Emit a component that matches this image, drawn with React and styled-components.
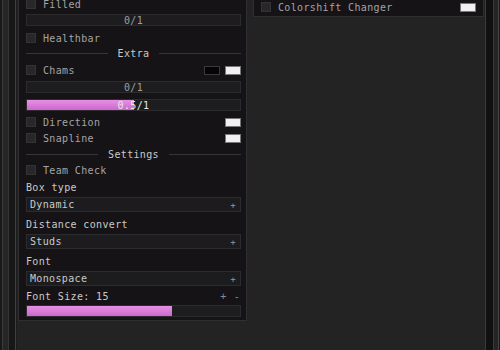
import React from "react";
import styled, { createGlobalStyle } from "styled-components";

const Global = createGlobalStyle`
  html, body { margin: 0; padding: 0; background: #232323; }
  body { font-family: "DejaVu Sans Mono", "Liberation Mono", monospace; }
`;

const Screen = styled.div`
  width: 500px;
  height: 350px;
  display: flex;
  overflow: hidden;
  background: #232323;
`;

const LeftFrame = styled.div`
  width: 17px;
  flex: none;
  background: linear-gradient(
    to right,
    #19191a 0 2px,
    #3b3b3c 2px 3px,
    #262627 3px 8px,
    #353536 8px 9px,
    #171718 9px 15px,
    #3f3f40 15px 16px,
    #1c1c1d 16px 17px
  );
`;

const RightFrame = styled.div`
  width: 15px;
  flex: none;
  background: linear-gradient(
    to right,
    #3a3a3b 0 1px,
    #111112 1px 8px,
    #3a3a3b 8px 9px,
    #252526 9px 13px,
    #444445 13px 14px,
    #1a1a1b 14px 15px
  );
`;

const Content = styled.div`
  flex: 1;
  display: flex;
  align-items: flex-start;
  gap: 6px;
  padding-left: 1px;
`;

const Panel = styled.div`
  width: ${(p) => p.$w}px;
  flex: none;
  box-sizing: border-box;
  background: #151315;
  border: 1px solid #2f2e30;
  border-top: none;
  margin-top: ${(p) => p.$top}px;
  padding: 0 5px ${(p) => p.$bottom}px 7px;
  display: flex;
  flex-direction: column;
  color: #b8b8b8;
  font-size: 10px;
  letter-spacing: 0.35px;
`;

const Row = styled.div`
  height: ${(p) => p.$h || 16}px;
  margin-top: ${(p) => p.$mt || 0}px;
  display: flex;
  align-items: center;
  gap: 7px;
  white-space: pre;
`;

const Check = styled.span`
  width: 8px;
  height: 8px;
  flex: none;
  background: #282729;
  border: 1px solid #343335;
`;

const CheckLabel = styled.span`
  color: #a4a4a4;
  flex: 1;
`;

const Label = styled.span`
  color: #cacaca;
  flex: 1;
`;

const Swatches = styled.div`
  display: flex;
  gap: 5px;
`;

const Swatch = styled.span`
  width: 14px;
  height: 7px;
  background: ${(p) => (p.$dark ? "#050505" : "#f0f0f0")};
  border: 1px solid ${(p) => (p.$dark ? "#3a3a3a" : "#777")};
`;

const Separator = styled.div`
  height: 16px;
  margin-top: ${(p) => p.$mt || 0}px;
  display: flex;
  align-items: center;
  gap: 10px;
  color: #cacaca;
  &::before,
  &::after {
    content: "";
    flex: 1;
    height: 1px;
    background: #363537;
  }
`;

const Slider = styled.div`
  position: relative;
  height: 12px;
  margin-top: ${(p) => p.$mt || 0}px;
  box-sizing: border-box;
  background: #1d1c1e;
  border: 1px solid #2c2b2d;
  display: flex;
  align-items: center;
  justify-content: center;
`;

const Fill = styled.div`
  position: absolute;
  left: 0;
  top: 0;
  bottom: 0;
  background: linear-gradient(#e690e6, #cc68cc);
`;

const SliderText = styled.span`
  position: relative;
  color: ${(p) => (p.$bright ? "#e8e8e8" : "#9e9e9e")};
`;

const Dropdown = styled.div`
  height: 15px;
  margin-top: ${(p) => p.$mt || 0}px;
  box-sizing: border-box;
  background: #1c1b1d;
  border: 1px solid #2c2b2d;
  display: flex;
  align-items: center;
  justify-content: space-between;
  padding: 0 4px 0 3px;
  color: #cacaca;
`;

const Plus = styled.span`
  color: #9a9a9a;
  font-size: 9px;
`;

const Steppers = styled.span`
  display: flex;
  gap: 7px;
  color: #8a8a8a;
  padding-right: 1px;
`;

const CheckItem = ({ label, mt, children }) => (
  <Row $mt={mt}>
    <Check />
    <CheckLabel>{label}</CheckLabel>
    {children}
  </Row>
);

const ValueSlider = ({ value, text, mt, bright }) => (
  <Slider $mt={mt}>
    {value > 0 && <Fill style={{ width: `${value * 100}%` }} />}
    {text && <SliderText $bright={bright}>{text}</SliderText>}
  </Slider>
);

const App = () => (
  <>
    <Global />
    <Screen>
      <LeftFrame />
      <Content>
        <Panel $w={229} $top={-4} $bottom={3}>
          <CheckItem label="Filled" />
          <ValueSlider value={0} text="0/1" mt={2} />
          <CheckItem label="Healthbar" mt={4} />
          <Separator $mt={-1}>Extra</Separator>
          <CheckItem label="Chams" mt={1}>
            <Swatches>
              <Swatch $dark />
              <Swatch />
            </Swatches>
          </CheckItem>
          <ValueSlider value={0} text="0/1" mt={3} />
          <ValueSlider value={0.5} text="0.5/1" mt={6} bright />
          <CheckItem label="Direction" mt={3}>
            <Swatch />
          </CheckItem>
          <CheckItem label="Snapline">
            <Swatch />
          </CheckItem>
          <Separator>Settings</Separator>
          <CheckItem label="Team Check" />
          <Row $mt={1}>
            <Label>Box type</Label>
          </Row>
          <Dropdown $mt={2}>
            Dynamic<Plus>+</Plus>
          </Dropdown>
          <Row $mt={4}>
            <Label>Distance convert</Label>
          </Row>
          <Dropdown $mt={2}>
            Studs<Plus>+</Plus>
          </Dropdown>
          <Row $mt={4}>
            <Label>Font</Label>
          </Row>
          <Dropdown $mt={2}>
            Monospace<Plus>+</Plus>
          </Dropdown>
          <Row $mt={3} $h={15}>
            <Label>Font Size: 15</Label>
            <Steppers>
              <span>+</span>
              <span>-</span>
            </Steppers>
          </Row>
          <ValueSlider value={0.68} mt={1} />
        </Panel>
        <Panel $w={231} $top={-1} $bottom={1}>
          <Row style={{ paddingRight: 2 }}>
            <Check />
            <CheckLabel>Colorshift Changer</CheckLabel>
            <Swatch />
          </Row>
        </Panel>
      </Content>
      <RightFrame />
    </Screen>
  </>
);

export default App;
